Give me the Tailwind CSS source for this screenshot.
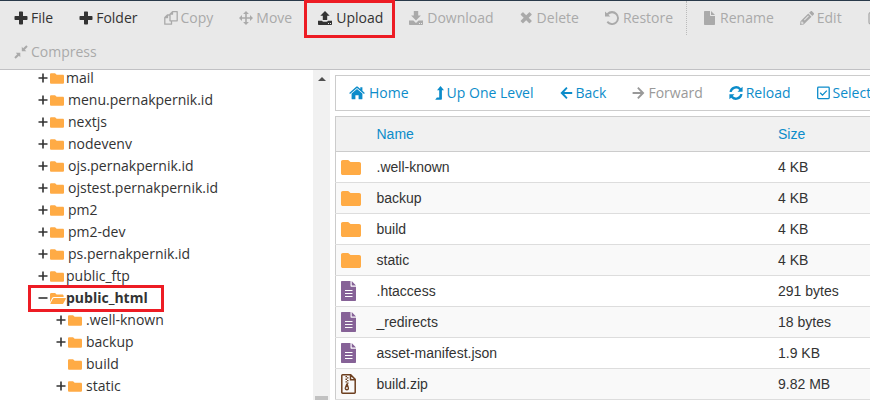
<!DOCTYPE html>
<html lang="en">
<head>
  <meta charset="UTF-8">
  <meta name="viewport" content="width=device-width, initial-scale=1.0">
  <title>File Manager</title>
  <script src="https://cdn.jsdelivr.net/npm/@tailwindcss/browser@4"></script>
</head>
<body class="h-screen overflow-hidden bg-white text-sm text-[#333] font-['Open_Sans',sans-serif]">
  <!-- Icons -->
  <svg class="hidden">
    <symbol id="plus" viewBox="0 0 14 14"><path d="M5.300.5h2.900a.8.800 0 0 1 .8.8V5h3.700a.8.800 0 0 1 .8.8v2.400a.8.800 0 0 1-.8.8H9v3.700a.8.800 0 0 1-.8.8H5.800a.8.800 0 0 1-.8-.8V9H1.300a.8.800 0 0 1-.8-.8V5.800A.8.800 0 0 1 1.300 5H5V1.300z"/></symbol>
    <symbol id="copy" viewBox="0 0 14 14"><path fill="none" stroke="currentColor" stroke-width="1.300" stroke-linejoin="round" d="M8.500.7h4.700v9.100H6V3.200zM8.500.7v2.500H6M6 4H3.400L.8 6.500v6.700h6.700V9.900M3.500 4v2.500H.8"/></symbol>
    <symbol id="move" viewBox="0 0 14 14"><path d="M7 0l2.900 3H7.800v3.200H11V4.100L14 7l-3 2.900V7.800H7.800V11h2.100L7 14l-2.900-3h2.100V7.800H3v2.100L0 7l3-2.900v2.100h3.200V3H4.100z"/></symbol>
    <symbol id="upload" viewBox="0 0 14 14"><path d="M7 0l4.700 4.700H9.200V9H4.800V4.700H2.300zM0 9.800h4c.3.700.9 1 1.600 1h2.800c.7 0 1.300-.3 1.600-1h4v3.500c0 .4-.3.700-.7.700H.7c-.4 0-.7-.3-.7-.7zm10 2.200v1h1v-1zm2 0v1h1v-1z" fill-rule="evenodd"/></symbol>
    <symbol id="download" viewBox="0 0 14 14"><path d="M4.800 0h4.400v4.500h2.700L7 9.400 2.100 4.500h2.700zM0 9.500h4.400L7 12l2.600-2.500H14v3.800c0 .4-.3.700-.7.700H.7c-.4 0-.7-.3-.7-.7zM10 12v1h1v-1zm2 0v1h1v-1z" fill-rule="evenodd"/></symbol>
    <symbol id="delete" viewBox="0 0 13 14"><path d="M3.400 1.400l2.800 2.800L9 1.400c.3-.3.600-.3.900 0l1.600 1.600c.3.300.3.600 0 .9L8.700 6.700l2.800 2.800c.3.300.3.600 0 .9L9.900 12c-.3.300-.6.300-.9 0L6.200 9.200 3.400 12c-.3.300-.6.300-.9 0L.9 10.400c-.3-.3-.3-.6 0-.9l2.800-2.800L.9 3.900c-.3-.3-.3-.6 0-.9l1.600-1.600c.3-.3.600-.3.900 0z"/></symbol>
    <symbol id="restore" viewBox="0 0 14 14"><path d="M0 .4L1.900 2.200A7 7 0 1 1 1.600 11.500L3 10.100A5 5 0 1 0 3.400 3.700L5.300 5.600H0z"/></symbol>
    <symbol id="rename" viewBox="0 0 14 14"><path d="M1.700 0H7v4.300c0 .4.300.7.700.7H12v8.300c0 .4-.3.700-.7.700H1.700c-.4 0-.7-.3-.7-.7V.7c0-.4.300-.7.700-.7zM8 0l4 4H8z"/></symbol>
    <symbol id="edit" viewBox="0 0 14 14"><path fill-rule="evenodd" d="M8.300 2.600l3.200 3.200-7.800 7.700L0 14l.5-3.700zM9.100 1.800L10.500.4c.5-.5 1.200-.5 1.700 0l1.500 1.500c.5.500.5 1.200 0 1.700L12.300 5zM1.500 10.600l-.3 1.600.7.700 1.600-.3v-1.100H2.500v-.9zM4 8.800l.6.600 4.200-4.200-.6-.6z"/></symbol>
    <symbol id="html" viewBox="0 0 14 14"><path fill="none" stroke="currentColor" stroke-width="1.300" d="M10 1.700H2.500c-.8 0-1.500.7-1.500 1.500v8.100c0 .8.700 1.500 1.500 1.500h8c.8 0 1.500-.7 1.500-1.500V8"/></symbol>
    <symbol id="compress" viewBox="0 0 14 14"><path d="M7.800 1.800l1.400 1.400L12.300.3l1.400 1.400-2.900 3.100 1.500 1.400H7.800zM1.800 7.700h4.500v4.500l-1.400-1.400-3.200 2.900L.3 12.300l2.900-3.100z"/></symbol>
    <symbol id="home" viewBox="0 0 16 14"><path d="M8 2.900l5.400 4.700v5.100c0 .4-.3.600-.6.600H9.600V9.200H6.400v4.100H3.200c-.3 0-.6-.2-.6-.6V7.600zM7.200.8c.5-.4 1.100-.4 1.600 0l2.500 2.100V1.200h2.100v3.600l2.400 2.100-.8 1L8 2 1 7.900l-.8-1z"/></symbol>
    <symbol id="up" viewBox="0 0 9 14"><path d="M5.500 0L9 4.300H6.900V13c0 .5-.3.800-.8.800H.2l1.700-2.200h2.300V4.300H2z"/></symbol>
    <symbol id="back" viewBox="0 0 13 14"><path d="M6.300 1l1.300 1.300L4.200 6h8v2h-8l3.400 3.700L6.300 13 .4 7z"/></symbol>
    <symbol id="forward" viewBox="0 0 13 14"><path d="M6.500 1L5.200 2.300 8.600 6h-8v2h8l-3.400 3.700L6.500 13l5.900-6z"/></symbol>
    <symbol id="reload" viewBox="0 0 14 14"><path d="M.5 6A6.600 6.600 0 0 1 11.900 2.300L13.600.7v5.100H8.500l1.800-1.900A4.500 4.500 0 0 0 2.700 6zM13.500 8A6.600 6.600 0 0 1 2.100 11.700L.4 13.300V8.200h5.100L3.700 10.100A4.500 4.500 0 0 0 11.300 8z"/></symbol>
    <symbol id="check" viewBox="0 0 13 14"><path fill="none" stroke="currentColor" stroke-width="1.300" d="M1.500 1.200h9.900a.8.800 0 0 1 .8.800v9.800a.8.800 0 0 1-.8.800H1.500a.8.800 0 0 1-.8-.8V2a.8.800 0 0 1 .8-.8zM3.200 6.800l2.300 2.300 4.300-4.500"/></symbol>
    <symbol id="folder" viewBox="0 0 20 15"><path d="M1.800 0h5.400L9.500 2H18.200c1 0 1.800.8 1.800 1.800v9.400c0 1-.8 1.800-1.800 1.800H1.800C.8 15 0 14.200 0 13.200V1.800C0 .8.800 0 1.800 0z"/></symbol>
    <symbol id="folder-open" viewBox="0 0 16 11"><path d="M0 9.300V1.300C0 .6.6 0 1.300 0h3.800l1.500 1.400h5.700c.7 0 1.300.6 1.300 1.300V4H4c-.9 0-1.500.4-1.900 1.100zM4 5h11.400c.5 0 .7.4.5.8l-2.600 4.600c-.2.4-.6.6-1.100.6H.9c-.5 0-.7-.4-.5-.8l2.500-4.500c.2-.4.600-.7 1.100-.7z"/></symbol>
    <symbol id="text-file" viewBox="0 0 15 20"><path fill-rule="evenodd" d="M1 0h8.500v4.700c0 .6.400 1 1 1H15V19c0 .6-.4 1-1 1H1c-.6 0-1-.4-1-1V1c0-.6.400-1 1-1zm3 9v1h7.500V9zm0 3v1h7.500v-1zm0 3v1h7.500v-1zM10.700 0L15 4.500h-4.300z"/></symbol>
    <symbol id="zip" viewBox="0 0 15 20"><path fill="none" stroke="currentColor" stroke-width="1.500" d="M1.600.8h8.100l4.500 4.600v13a.8.800 0 0 1-.8.800H1.600a.8.800 0 0 1-.8-.8V1.600a.8.800 0 0 1 .8-.8zM9.500 1v4.700H14"/><path d="M4.500 2H6v1.300H4.500zM6 3.300h1.500v1.300H6zM4.500 4.600H6v1.300H4.500zM6 5.900h1.500v1.300H6zM4.500 7.200H6v1.300H4.500zM6 8.500h1.500v1.300H6z"/><path fill-rule="evenodd" d="M5.300 9.500h1.400l1.300 4.200c.4 1.600-.6 2.700-2.100 2.700s-2.600-1.100-2.200-2.700zM4.800 14c0 .6.500.9 1.100.9s1.100-.3 1.100-.9-.5-.8-1.100-.8-1.100.2-1.100.8z"/></symbol>
    <symbol id="expand" viewBox="0 0 10 10"><path d="M4.200.5h1.600v3.700h3.700v1.600H5.800v3.700H4.200V5.800H.5V4.200h3.700z"/></symbol>
    <symbol id="collapse" viewBox="0 0 10 10"><path d="M.5 4.200h9v1.600h-9z"/></symbol>
  </svg>

  <div class="flex h-full flex-col">
    <!-- Toolbar -->
    <header class="relative z-10 shrink-0 border-t border-b border-t-[#293a4a] border-b-[#c1c1c4] bg-[#e9e9e9] pl-px whitespace-nowrap">
      <div class="flex h-[34px]">
        <button class="flex shrink-0 items-center gap-[3px] px-[13px]"><svg class="size-3.5 fill-current"><use href="#plus"/></svg>File</button>
        <button class="flex shrink-0 items-center gap-[3px] px-[13px]"><svg class="size-3.5 fill-current"><use href="#plus"/></svg>Folder</button>
        <button disabled class="flex shrink-0 items-center gap-[3px] px-[13px] text-[#aaa]"><svg class="size-3.5 fill-current"><use href="#copy"/></svg>Copy</button>
        <button disabled class="flex shrink-0 items-center gap-[3px] px-[13px] text-[#aaa]"><svg class="size-3.5 fill-current"><use href="#move"/></svg>Move</button>
        <button class="relative flex shrink-0 items-center gap-1 px-[13px]"><svg class="size-3.5 fill-current"><use href="#upload"/></svg>Upload<span class="absolute -top-px right-px -left-px h-[38px] border-3 border-[#ed1c24]"></span></button>
        <button disabled class="flex shrink-0 items-center gap-1 px-[13px] text-[#aaa]"><svg class="size-3.5 fill-current"><use href="#download"/></svg>Download</button>
        <button disabled class="flex shrink-0 items-center gap-1 px-[13px] text-[#aaa]"><svg class="h-3.5 w-[13px] fill-current"><use href="#delete"/></svg>Delete</button>
        <button disabled class="flex shrink-0 items-center gap-1 px-[13px] text-[#aaa]"><svg class="size-3.5 fill-current"><use href="#restore"/></svg>Restore</button>
        <button disabled class="flex shrink-0 items-center gap-[3px] border-l border-dotted border-[#bbb] pr-[13px] pl-4 text-[#aaa]"><svg class="size-3.5 fill-current"><use href="#rename"/></svg>Rename</button>
        <button disabled class="flex shrink-0 items-center gap-[3px] px-[13px] text-[#aaa]"><svg class="size-3.5 fill-current"><use href="#edit"/></svg>Edit</button>
        <button disabled class="flex shrink-0 items-center px-[13px] text-[#aaa]"><svg class="size-3.5 fill-current"><use href="#html"/></svg></button>
      </div>
      <div class="flex h-[34px]">
        <button disabled class="flex shrink-0 items-center gap-[3px] px-[13px] text-[#aaa]"><svg class="size-3.5 fill-current"><use href="#compress"/></svg>Compress</button>
      </div>
    </header>

    <div class="flex min-h-0 flex-1">
      <!-- Folder tree -->
      <nav class="min-w-0 basis-[313px] shrink-0 overflow-hidden">
        <ul id="tree" class="pl-[38px] leading-4 whitespace-nowrap"></ul>
      </nav>
      <div class="flex w-[17px] shrink-0 flex-col items-center justify-between bg-[#f1f1f1]">
        <svg class="mt-[7px] h-1 w-2 fill-[#505050]" viewBox="0 0 8 4"><path d="M4 0l4 4H0z"/></svg>
        <div class="h-1 w-[13px] bg-[#c1c1c1]"></div>
      </div>

      <!-- File list -->
      <main class="min-w-0 flex-1 overflow-hidden pt-[5px] pl-[5px]">
        <div class="flex h-9 border border-r-0 border-[#ccc] whitespace-nowrap text-[#0c8cca]">
          <button class="flex shrink-0 items-center gap-1 px-[13px]"><svg class="h-3.5 w-4 fill-current"><use href="#home"/></svg>Home</button>
          <button class="flex shrink-0 items-center gap-[3px] px-[13px]"><svg class="h-3.5 w-[9px] fill-current"><use href="#up"/></svg>Up One Level</button>
          <button class="flex shrink-0 items-center gap-[3px] px-[13px]"><svg class="h-3.5 w-[13px] fill-current"><use href="#back"/></svg>Back</button>
          <button disabled class="flex shrink-0 items-center gap-[3px] px-[13px] text-[#999]"><svg class="h-3.5 w-[13px] fill-current"><use href="#forward"/></svg>Forward</button>
          <button class="flex shrink-0 items-center gap-[3px] px-[13px]"><svg class="size-3.5 fill-current"><use href="#reload"/></svg>Reload</button>
          <button class="flex shrink-0 items-center gap-[3px] px-[13px]"><svg class="h-3.5 w-[13px] fill-current"><use href="#check"/></svg>Select</button>
        </div>
        <table class="mt-[5px] w-full table-fixed border-collapse border border-r-0 border-[#ccc] text-left font-['Liberation_Sans',sans-serif]">
          <colgroup><col class="w-[41px]"><col><col class="w-[92px]"></colgroup>
          <thead>
            <tr class="h-[35px] border-b border-[#ccc] bg-[#f1f1f1] text-[#0c8cca]">
              <th></th>
              <th class="font-normal">Name</th>
              <th class="font-normal">Size</th>
            </tr>
          </thead>
          <tbody id="files"></tbody>
        </table>
      </main>
    </div>
  </div>

  <script>
    const tree = [
      { name: 'mail', special: true },
      { name: 'menu.pernakpernik.id' },
      { name: 'nextjs' },
      { name: 'nodevenv' },
      { name: 'ojs.pernakpernik.id' },
      { name: 'ojstest.pernakpernik.id' },
      { name: 'pm2' },
      { name: 'pm2-dev' },
      { name: 'ps.pernakpernik.id' },
      { name: 'public_ftp', special: true },
      { name: 'public_html', open: true },
      { name: '.well-known', child: true },
      { name: 'backup', child: true },
      { name: 'build', child: true, leaf: true },
      { name: 'static', child: true },
    ];

    const files = [
      ['.well-known', '4 KB', 'folder'],
      ['backup', '4 KB', 'folder'],
      ['build', '4 KB', 'folder'],
      ['static', '4 KB', 'folder'],
      ['.htaccess', '291 bytes', 'text'],
      ['_redirects', '18 bytes', 'text'],
      ['asset-manifest.json', '1.9 KB', 'text'],
      ['build.zip', '9.82 MB', 'zip'],
    ];

    const fileIcons = {
      folder: '<svg class="h-[15px] w-5 fill-[#ffab45]"><use href="#folder"/></svg>',
      text: '<svg class="h-5 w-[15px] fill-[#866297]"><use href="#text-file"/></svg>',
      zip: '<svg class="h-5 w-[15px] fill-current text-[#6d3f1f]"><use href="#zip"/></svg>',
    };

    document.getElementById('tree').innerHTML = tree.map(item => {
      const toggle = item.leaf
        ? '<span class="w-2.5"></span>'
        : `<button class="w-2.5"><svg class="size-2.5 fill-current"><use href="#${item.open ? 'collapse' : 'expand'}"/></svg></button>`;
      const folder = item.open
        ? '<svg class="ml-0.5 h-[11px] w-4 fill-[#ffab45]"><use href="#folder-open"/></svg>'
        : '<svg class="ml-0.5 h-[11px] w-3.5 fill-[#ffab45]"><use href="#folder"/></svg>';
      const gap = item.open ? '' : item.special ? 'ml-0.5' : 'ml-1';
      const box = item.open ? '<span class="absolute -top-0.5 -left-2.5 h-[27px] w-[136px] border-3 border-[#ed1c24]"></span>' : '';
      return `<li class="relative flex h-[22px] items-center first:h-[19px] first:pb-[3px] ${item.child ? 'pl-[18px]' : ''}">${toggle}${folder}<span class="${gap} ${item.open ? 'font-bold' : ''}">${item.name}</span>${box}</li>`;
    }).join('');

    document.getElementById('files').innerHTML = files.map(([name, size, type]) => `
      <tr class="h-[31px] border-b border-[#ddd] even:bg-[#f9f9f9]">
        <td class="pl-[5px]">${fileIcons[type]}</td>
        <td>${name}</td>
        <td>${size}</td>
      </tr>`).join('');
  </script>
</body>
</html>
